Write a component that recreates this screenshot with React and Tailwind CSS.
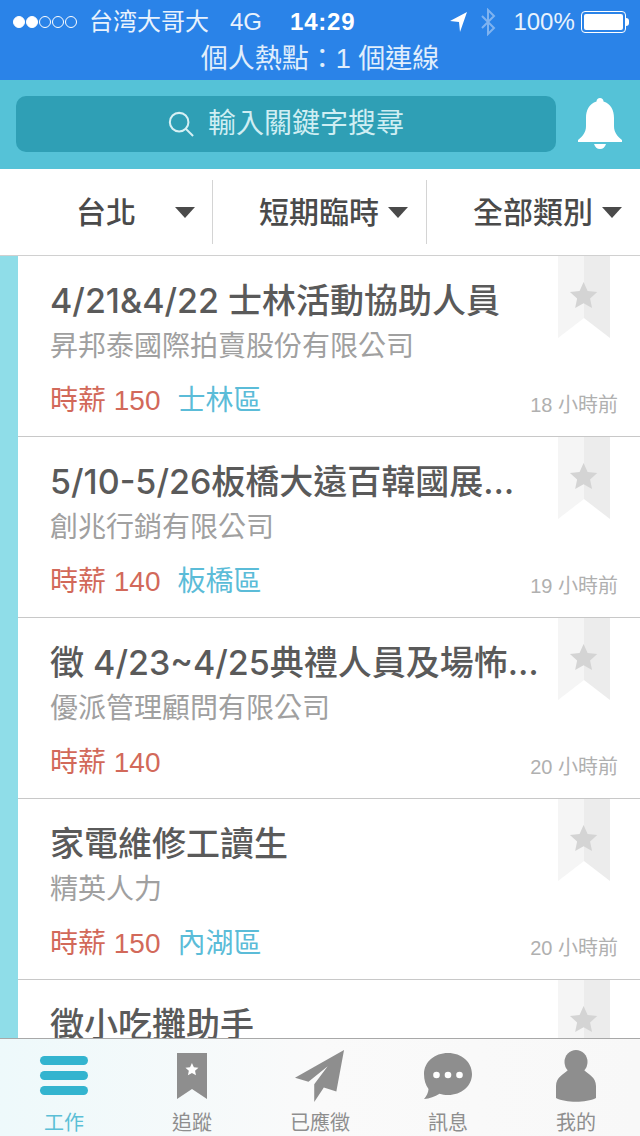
import React from 'react';

const FONT = { fontFamily: '"Liberation Sans", "Noto Sans CJK TC", sans-serif' };

const JOBS = [
  { title: '4/21&4/22 士林活動協助人員', company: '昇邦泰國際拍賣股份有限公司', pay: '時薪 150', area: '士林區', time: '18 小時前' },
  { title: '5/10-5/26板橋大遠百韓國展…', company: '創兆行銷有限公司', pay: '時薪 140', area: '板橋區', time: '19 小時前' },
  { title: '徵 4/23~4/25典禮人員及場怖…', company: '優派管理顧問有限公司', pay: '時薪 140', area: '', time: '20 小時前' },
  { title: '家電維修工讀生', company: '精英人力', pay: '時薪 150', area: '內湖區', time: '20 小時前' },
  { title: '徵小吃攤助手', company: '', pay: '', area: '', time: '' },
];

const STAR = 'M12 1.5l3.1 6.9 7.4.8-5.5 5 1.5 7.3-6.5-3.7-6.5 3.7 1.5-7.3-5.5-5 7.4-.8z';

function Caret() {
  return <span className="w-0 h-0 border-x-[10px] border-x-transparent border-t-[11px] border-t-[#4a4a4a]" />;
}

function Ribbon() {
  return (
    <svg className="absolute top-0 right-[30px]" width="52" height="82" viewBox="0 0 52 82">
      <path d="M0 0h26v62L0 82z" fill="#f5f5f5" />
      <path d="M26 0h26v82L26 62z" fill="#ececec" />
      <g transform="translate(10 24) scale(1.3)"><path d={STAR} fill="#d4d4d4" /></g>
    </svg>
  );
}

function JobRow({ job }) {
  return (
    <div className="relative flex h-[181px] shrink-0">
      <div className="w-[18px] shrink-0 bg-[#8fdde8]" />
      <div className="flex-1 pl-[32px] pt-[22px] min-w-0 border-b border-[#c8c8c8]">
        <div className="text-[34px] leading-[46px] font-medium text-[#5a5a5a] whitespace-nowrap" style={{ fontFamily: 'Inter, "Noto Sans CJK TC", sans-serif' }}>{job.title}</div>
        <div className="text-[28px] leading-[46px] text-[#a0a0a0] whitespace-nowrap">{job.company}</div>
        <div className="mt-[8px] flex gap-[17px] text-[28px] leading-[46px] whitespace-nowrap">
          <span className="text-[#d2695a]">{job.pay}</span>
          <span className="text-[#5bbcd8]">{job.area}</span>
        </div>
      </div>
      <Ribbon />
      <div className="absolute right-[22px] bottom-[19px] text-[20px] leading-[26px] text-[#b0b0b0]">{job.time}</div>
    </div>
  );
}

function Tab({ label, active, children }) {
  return (
    <div className="flex-1 flex flex-col items-center">
      <div className="h-[68px] mb-[2px] flex items-center justify-center">{children}</div>
      <div className={`text-[20px] leading-[26px] ${active ? 'text-[#5bbfd6]' : 'text-[#8e8e8e]'}`}>{label}</div>
    </div>
  );
}

export default function App() {
  return (
    <div className="relative w-[640px] h-[1136px] overflow-hidden flex flex-col bg-white" style={FONT}>
      {/* Status bar + hotspot */}
      <div className="h-[80px] shrink-0 bg-[#2a83e8] text-white">
        <div className="h-[44px] flex items-center pl-[13px] pr-[10px] text-[24px] text-[#e8f2fd]">
          <div className="flex gap-[1px] w-[68px]">
            {[1, 1, 0, 0, 0].map((on, i) => (
              <span key={i} className={`w-[12px] h-[12px] rounded-full border border-white ${on ? 'bg-white' : ''}`} />
            ))}
          </div>
          <span className="ml-[8px]">台湾大哥大</span>
          <span className="ml-[21px]">4G</span>
          <span className="ml-[28px] font-semibold text-white tracking-[0.8px]">14:29</span>
          <svg className="ml-[94px]" width="19" height="22" viewBox="0 0 19 22"><path d="M18 1L1 10l9 1 1 10z" fill="#fff" /></svg>
          <svg className="ml-[12px]" width="16" height="28" viewBox="0 0 16 28" fill="none" stroke="#7fb3f0" strokeWidth="2"><path d="M2 8l12 12-6 6V2l6 6L2 20" /></svg>
          <span className="ml-[17px]">100%</span>
          <span className="ml-[6px] w-[45px] h-[22px] rounded-[4px] border border-white p-[2px] flex"><span className="flex-1 rounded-[2px] bg-white" /></span>
          <span className="w-[3px] h-[8px] bg-white rounded-r-sm" />
        </div>
        <div className="text-center text-[27px] leading-[30px] text-[#e0eefc]">個人熱點：1 個連線</div>
      </div>

      {/* Search */}
      <div className="h-[89px] shrink-0 bg-[#55c2d7] flex items-center pl-[16px] pr-[12px] gap-[22px] pb-[1px]">
        <div className="w-[540px] h-[56px] rounded-[10px] bg-[#2f9fb5] flex items-center justify-center gap-[14px] text-[28px] text-[#cfeef3]">
          <svg width="26" height="26" viewBox="0 0 28 28" fill="none" stroke="#d6f0f4" strokeWidth="2.2"><circle cx="12" cy="12" r="10" /><path d="M19 19l8 8" /></svg>
          <span>輸入關鍵字搜尋</span>
        </div>
        <svg width="44" height="52" viewBox="0 0 44 52" fill="#fff">
          <path d="M22 0c2 0 3.500 1.500 3.500 3.500C33 6 36 12 36 20v8c0 6 3 10 8 14v2H0v-2c5-4 8-8 8-14v-8C8 12 11 6 18.500 3.500 18.500 1.500 20 0 22 0z" />
          <path d="M16 46h12c-1 3-3 5-6 5s-5-2-6-5z" />
        </svg>
      </div>

      {/* Filters */}
      <div className="h-[87px] shrink-0 flex items-center border-b border-[#d0d0d0] text-[30px] text-[#4a4a4a] font-medium">
        <div className="w-[213px] h-[64px] border-r border-[#d4d4d4] flex items-center pl-[76px]">
          <span>台北</span>
          <span className="ml-[39px] flex"><Caret /></span>
        </div>
        <div className="w-[214px] h-[64px] border-r border-[#d4d4d4] flex items-center pl-[46px] gap-[9px]">
          <span>短期臨時</span>
          <Caret />
        </div>
        <div className="flex-1 h-[64px] flex items-center pl-[46px] gap-[9px] whitespace-nowrap">
          <span>全部類別</span>
          <Caret />
        </div>
      </div>

      {/* Job list */}
      <div className="flex-1 min-h-0 overflow-hidden flex flex-col">
        {JOBS.map((job, i) => <JobRow key={i} job={job} />)}
      </div>

      {/* Tab bar */}
      <div className="h-[98px] shrink-0 border-t border-[#a8a8a8] bg-gradient-to-r from-[#eef9fb] via-[#fafafa] to-[#f8f8f8] flex pt-[4px] relative z-10">
        <Tab label="工作" active>
          <div className="flex flex-col gap-[6px]">
            <span className="block w-[48px] h-[9px] rounded-full bg-[#33b4cf]" />
            <span className="block w-[48px] h-[9px] rounded-full bg-[#33b4cf]" />
            <span className="block w-[48px] h-[9px] rounded-full bg-[#33b4cf]" />
          </div>
        </Tab>
        <Tab label="追蹤">
          <svg width="30" height="46" viewBox="0 0 30 46"><path d="M0 0h30v46L15 36 0 46z" fill="#8e8e8e" /><g transform="translate(7.500 9) scale(.62)"><path d={STAR} fill="#fff" /></g></svg>
        </Tab>
        <Tab label="已應徵">
          <svg width="50" height="52" viewBox="0 0 52 64" preserveAspectRatio="none"><path d="M51 0L0 34l14 5L34 20 20 42l0 22 10-18 13 5z" fill="#8e8e8e" /></svg>
        </Tab>
        <Tab label="訊息">
          <svg width="48" height="46" viewBox="0 0 48 46"><path d="M24 0c13.500 0 24 9 24 21 0 12-10.500 21-24 21-3 0-6-.5-8.500-1.300C11 43.500 5.500 45.500 0 46c2.500-3 4.500-6.500 4.500-10C1.500 32 0 27 0 21 0 9 10.500 0 24 0z" fill="#8e8e8e" /><circle cx="12.500" cy="22" r="3.300" fill="#fff" /><circle cx="24" cy="22" r="3.300" fill="#fff" /><circle cx="35.500" cy="22" r="3.300" fill="#fff" /></svg>
        </Tab>
        <Tab label="我的">
          <svg width="40" height="52" viewBox="0 0 40 52"><ellipse cx="20" cy="12" rx="11.500" ry="12" fill="#8e8e8e" /><path d="M0 48V36c0-9 8-12 12-16h16c4 4 12 7 12 16v12c-10 5-30 5-40 0z" fill="#8e8e8e" /></svg>
        </Tab>
      </div>
    </div>
  );
}
